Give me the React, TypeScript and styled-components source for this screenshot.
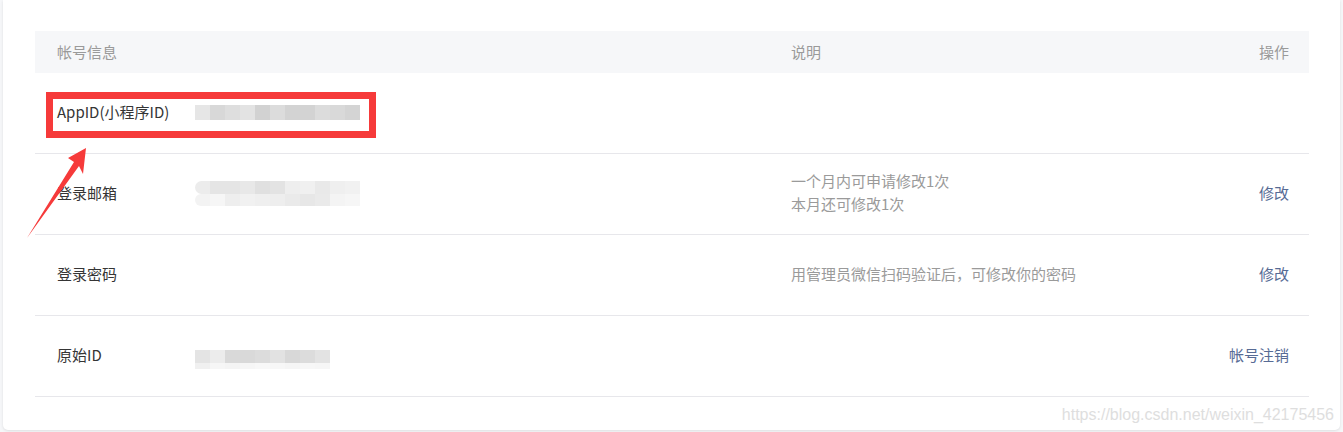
import React from 'react';
import styled, { createGlobalStyle } from 'styled-components';

const GlobalStyle = createGlobalStyle`
  html, body {
    margin: 0;
    padding: 0;
    background: #f6f7f9;
  }
  body {
    font-family: "Microsoft YaHei", "Noto Sans CJK SC", "Liberation Sans", sans-serif;
    font-size: 15px;
    color: #353535;
  }
`;

const Page = styled.div`
  width: 1343px;
  height: 432px;
  overflow: hidden;
`;

const Card = styled.div`
  position: relative;
  margin: 0 3px;
  padding: 31px 31px 33px 32px;
  background: #fff;
  border-radius: 0 0 5px 5px;
  box-shadow: 0 1px 3px rgba(0, 0, 0, 0.1);
`;

const Table = styled.div`
  display: flex;
  flex-direction: column;
`;

const HeadRow = styled.div`
  display: grid;
  grid-template-columns: 138px 596px 1fr 200px;
  align-items: center;
  box-sizing: border-box;
  height: 42px;
  padding: 0 20px 2px 22px;
  background: #f6f7f9;
  color: #9a9a9a;
`;

const Row = styled.div`
  display: grid;
  grid-template-columns: 138px 596px 1fr 200px;
  align-items: center;
  box-sizing: border-box;
  height: 81px;
  padding: 0 20px 4px 22px;
  border-bottom: 1px solid #e7e7eb;
`;

const Label = styled.div`
  color: #353535;
`;

const HeadCell = styled.div<{ $right?: boolean }>`
  text-align: ${p => (p.$right ? 'right' : 'left')};
`;

const Desc = styled.div`
  color: #9a9a9a;
  line-height: 23px;
`;

const Action = styled.a`
  justify-self: end;
  color: #576b95;
  text-decoration: none;
`;

const Mosaic = styled.div<{ $shift: number }>`
  display: flex;
  flex-direction: column;
  margin-top: ${p => p.$shift}px;
`;

const MosaicRow = styled.div`
  display: flex;
`;

const Cell = styled.div<{ $c: string; $w: number; $h: number; $round?: boolean }>`
  width: ${p => p.$w}px;
  height: ${p => p.$h}px;
  background: ${p => p.$c};
  border-radius: ${p => (p.$round ? '7px 0 0 7px' : '0')};
`;

const Highlight = styled.div`
  position: absolute;
  left: 43px;
  top: 92px;
  width: 316px;
  height: 32px;
  border: 7px solid #f63a3a;
  pointer-events: none;
`;

const Arrow = styled.svg`
  position: absolute;
  left: -3px;
  top: 0;
  width: 120px;
  height: 260px;
  pointer-events: none;
`;

const Watermark = styled.div`
  position: absolute;
  right: 6px;
  bottom: 6px;
  font-family: "Liberation Sans", Arial, sans-serif;
  font-size: 16px;
  color: #dedede;
`;

type Blur = { w: number; rows: { h: number; cells: string[] }[]; shift: number; round?: boolean };

const appIdBlur: Blur = {
  w: 15,
  shift: 2,
  rows: [
    {
      h: 15,
      cells: ['#e6e6e6', '#d8d8d8', '#dedede', '#e3e3e3', '#d2d2d2', '#dcdcdc', '#d3d3d3', '#d3d3d3', '#dcdcdc', '#d9d9d9', '#d4d4d4'],
    },
  ],
};

const emailBlur: Blur = {
  w: 15,
  shift: 2,
  round: true,
  rows: [
    {
      h: 13,
      cells: ['#ececec', '#e5e5e5', '#e5e5e5', '#e8e8e8', '#e0e0e0', '#e3e3e3', '#eeeeee', '#f0f0f0', '#e9e9e9', '#efefef', '#f1f1f1'],
    },
    {
      h: 12,
      cells: ['#f3f3f3', '#f6f6f6', '#eeeeee', '#f1f1f1', '#efefef', '#eeeeee', '#eaeaea', '#e7e7e7', '#eaeaea', '#f4f4f4', '#f6f6f6'],
    },
  ],
};

const origBlur: Blur = {
  w: 15,
  shift: 10,
  rows: [
    {
      h: 13,
      cells: ['#e4e4e4', '#ececec', '#d9d9d9', '#d9d9d9', '#dcdcdc', '#e2e2e2', '#d8d8d8', '#dcdcdc', '#e3e3e3'],
    },
    {
      h: 6,
      cells: ['#f0f0f0', '#f6f6f6', '#f4f4f4', '#f6f6f6', '#f8f8f8', '#f7f7f7', '#f5f5f5', '#f7f7f7', '#f6f6f6'],
    },
  ],
};

const Blurred = ({ blur }: { blur: Blur }) => (
  <Mosaic $shift={blur.shift}>
    {blur.rows.map((r, i) => (
      <MosaicRow key={i}>
        {r.cells.map((c, j) => (
          <Cell key={j} $c={c} $w={blur.w} $h={r.h} $round={blur.round && j === 0} />
        ))}
      </MosaicRow>
    ))}
  </Mosaic>
);

export default function App() {
  return (
    <Page>
      <GlobalStyle />
      <Card>
        <Table>
          <HeadRow>
            <HeadCell>帐号信息</HeadCell>
            <HeadCell />
            <HeadCell>说明</HeadCell>
            <HeadCell $right>操作</HeadCell>
          </HeadRow>
          <Row>
            <Label>AppID(小程序ID)</Label>
            <Blurred blur={appIdBlur} />
            <Desc />
            <div />
          </Row>
          <Row>
            <Label>登录邮箱</Label>
            <Blurred blur={emailBlur} />
            <Desc>
              一个月内可申请修改1次
              <br />
              本月还可修改1次
            </Desc>
            <Action href="#">修改</Action>
          </Row>
          <Row>
            <Label>登录密码</Label>
            <div />
            <Desc>用管理员微信扫码验证后，可修改你的密码</Desc>
            <Action href="#">修改</Action>
          </Row>
          <Row>
            <Label>原始ID</Label>
            <Blurred blur={origBlur} />
            <Desc />
            <Action href="#">帐号注销</Action>
          </Row>
        </Table>

        <Highlight />
        <Arrow viewBox="0 0 120 260">
          <polygon points="86,148 68,158 74,162 27,238 79,166 83,174" fill="#f63a3a" />
        </Arrow>
        <Watermark>https://blog.csdn.net/weixin_42175456</Watermark>
      </Card>
    </Page>
  );
}
